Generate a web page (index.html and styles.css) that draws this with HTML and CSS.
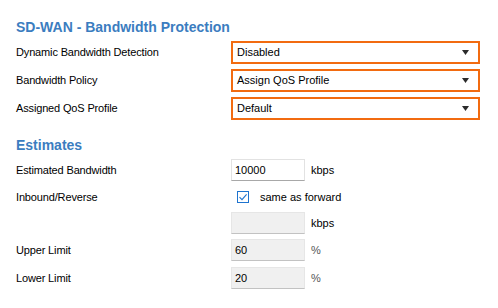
FILE: index.html
```html
<!doctype html>
<html>
<head>
<meta charset="utf-8">
<title>SD-WAN - Bandwidth Protection</title>
<link rel="stylesheet" href="styles.css">
</head>
<body>
<div class="panel">
  <h2>SD-WAN - Bandwidth Protection</h2>
  <div class="row">
    <label>Dynamic Bandwidth Detection</label>
    <div class="select"><span>Disabled</span><svg class="arrow" width="7" height="5" viewBox="0 0 7 5"><path d="M0 0H7L3.5 5Z"/></svg></div>
  </div>
  <div class="row">
    <label>Bandwidth Policy</label>
    <div class="select"><span>Assign QoS Profile</span><svg class="arrow" width="7" height="5" viewBox="0 0 7 5"><path d="M0 0H7L3.5 5Z"/></svg></div>
  </div>
  <div class="row">
    <label>Assigned QoS Profile</label>
    <div class="select"><span>Default</span><svg class="arrow" width="7" height="5" viewBox="0 0 7 5"><path d="M0 0H7L3.5 5Z"/></svg></div>
  </div>

  <h2 class="estimates">Estimates</h2>
  <div class="row">
    <label>Estimated Bandwidth</label>
    <div class="field"><div class="input">10000</div><span class="unit">kbps</span></div>
  </div>
  <div class="row short">
    <label>Inbound/Reverse</label>
    <div class="field"><span class="check"><svg width="10" height="10" viewBox="0 0 10 10"><path d="M1.5 5.2L4 7.6L8.6 2.4" fill="none" stroke="#1e74cf" stroke-width="1.1"/></svg></span><span class="check-label">same as forward</span></div>
  </div>
  <div class="row short">
    <label></label>
    <div class="field"><div class="input disabled"></div><span class="unit">kbps</span></div>
  </div>
  <div class="row">
    <label>Upper Limit</label>
    <div class="field"><div class="input disabled">60</div><span class="unit pct">%</span></div>
  </div>
  <div class="row">
    <label>Lower Limit</label>
    <div class="field"><div class="input disabled">20</div><span class="unit pct">%</span></div>
  </div>
</div>
</body>
</html>
```

FILE: styles.css
```css
html {
  font-family: "Liberation Sans", Arial, sans-serif;
  font-size: 11px;
  background-color: white;
  color: #000;
}
body {
  margin: 0;
  padding: 0;
}
* {
  box-sizing: border-box;
}
.panel {
  padding: 19px 0 0 16px;
}
h2 {
  margin: 0 0 2px 0;
  font-size: 14px;
  line-height: 17px;
  font-weight: bold;
  color: #3b7dc0;
}
h2.estimates {
  margin-top: 15px;
}
.row {
  display: grid;
  grid-template-columns: 215px 1fr;
  align-items: center;
  height: 28px;
}
.row.short {
  height: 26px;
}
.row label {
  letter-spacing: -0.15px;
}
.select {
  width: 249px;
  height: 23px;
  border: 2px solid #f26b10;
  display: flex;
  align-items: center;
  justify-content: space-between;
  padding: 0 9px 0 4px;
}
.select .arrow {
  fill: #2b2b2b;
}
.field {
  display: flex;
  align-items: center;
}
.input {
  width: 74px;
  height: 22px;
  line-height: 20px;
  padding: 0 3px;
  border: 1px solid #e2e2e2;
  border-bottom-color: #a8a8a8;
  background-color: white;
}
.input.disabled {
  background-color: #f0f0f0;
  border-color: #e6e6e6;
  border-bottom-color: #c2c2c2;
}
.unit {
  margin-left: 6px;
}
.unit.pct {
  color: #555;
}
.check {
  width: 12px;
  height: 12px;
  border: 1px solid #1e74cf;
  margin-left: 6px;
  display: flex;
}
.check-label {
  margin-left: 11px;
}
```
